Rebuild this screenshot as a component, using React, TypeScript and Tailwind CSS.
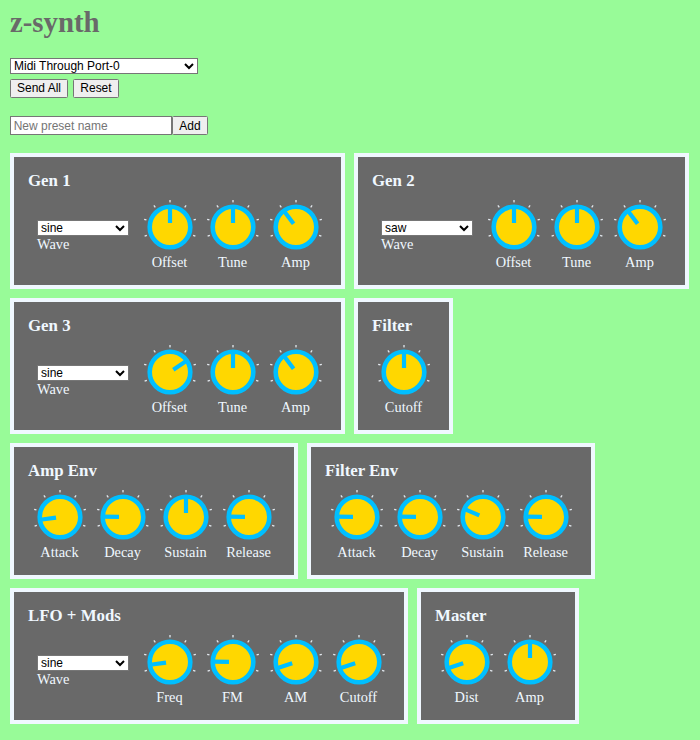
import React from "react";

type KnobSpec = { label: string; angle: number };
type PanelSpec = { title: string; wave?: string; knobs: KnobSpec[] };

const rows: PanelSpec[][] = [
  [
    {
      title: "Gen 1",
      wave: "sine",
      knobs: [
        { label: "Offset", angle: 0 },
        { label: "Tune", angle: 0 },
        { label: "Amp", angle: -37 },
      ],
    },
    {
      title: "Gen 2",
      wave: "saw",
      knobs: [
        { label: "Offset", angle: 0 },
        { label: "Tune", angle: 0 },
        { label: "Amp", angle: -37 },
      ],
    },
  ],
  [
    {
      title: "Gen 3",
      wave: "sine",
      knobs: [
        { label: "Offset", angle: 56 },
        { label: "Tune", angle: 0 },
        { label: "Amp", angle: -37 },
      ],
    },
    { title: "Filter", knobs: [{ label: "Cutoff", angle: 0 }] },
  ],
  [
    {
      title: "Amp Env",
      knobs: [
        { label: "Attack", angle: -98 },
        { label: "Decay", angle: -89 },
        { label: "Sustain", angle: 0 },
        { label: "Release", angle: -89 },
      ],
    },
    {
      title: "Filter Env",
      knobs: [
        { label: "Attack", angle: -89 },
        { label: "Decay", angle: -89 },
        { label: "Sustain", angle: -67 },
        { label: "Release", angle: -89 },
      ],
    },
  ],
  [
    {
      title: "LFO + Mods",
      wave: "sine",
      knobs: [
        { label: "Freq", angle: -98 },
        { label: "FM", angle: -89 },
        { label: "AM", angle: -108 },
        { label: "Cutoff", angle: -108 },
      ],
    },
    {
      title: "Master",
      knobs: [
        { label: "Dist", angle: -108 },
        { label: "Amp", angle: 0 },
      ],
    },
  ],
];

const ticks = [-110, -73.33, -36.67, 0, 36.67, 73.33, 110];

const control =
  "box-border [zoom:0.9] text-[13.333px] leading-[normal] [appearance:auto] [background:revert] [border-radius:revert] [border:revert] [color:revert] [letter-spacing:revert]";

function Knob({ label, angle }: KnobSpec) {
  return (
    <div className="flex w-[63px] flex-col items-center">
      <svg width="63" height="54" viewBox="0 0 63 54" className="block">
        {ticks.map((t) => (
          <rect
            key={t}
            x="31.35"
            y="0"
            width="1.3"
            height="2.4"
            fill="#e4eaf0"
            transform={`rotate(${t} 32 27)`}
          />
        ))}
        <circle cx="32" cy="27" r="20.3" fill="#ffd700" stroke="#00bfff" strokeWidth="4.6" />
        <rect
          x="29.9"
          y="7"
          width="4.2"
          height="16"
          fill="#00bfff"
          transform={`rotate(${angle} 32 27)`}
        />
      </svg>
      <span className="whitespace-nowrap text-[14.4px] leading-[17px]">{label}</span>
    </div>
  );
}

function Panel({ title, wave, knobs }: PanelSpec) {
  return (
    <section className="h-[136px] shrink-0 border-4 border-[#f0f8ff] bg-[#696969] px-[14px] pt-[14px] text-[#f0f8ff]">
      <h3 className="text-[16.85px] leading-[19px] font-bold">{title}</h3>
      <div className="mt-[10px] flex">
        {wave && (
          <div className="flex w-[110px] flex-col px-[9px] pt-5">
            <div className="flex h-4 font-['Liberation_Sans',sans-serif]">
              <select className={`${control} h-[17.78px] w-[102.22px] shrink-0`} defaultValue={wave}>
                <option>sine</option>
                <option>saw</option>
              </select>
            </div>
            <span className="text-[14.4px] leading-[17px]">Wave</span>
          </div>
        )}
        {knobs.map((k) => (
          <Knob key={k.label} {...k} />
        ))}
      </div>
    </section>
  );
}

export default function App() {
  return (
    <main className="h-[740px] w-[700px] overflow-hidden bg-[#98fb98] pl-[10px] font-['Liberation_Serif',serif]">
      <h1 className="pt-[6px] text-[28.8px] leading-[33px] font-bold text-[#696969]">z-synth</h1>
      <div className="mt-[19px] flex h-4 font-['Liberation_Sans',sans-serif]">
        <select className={`${control} h-[17.78px] w-[208.89px]`}>
          <option>Midi Through Port-0</option>
        </select>
      </div>
      <div className="mt-[5px] flex h-[19px] gap-[5px] font-['Liberation_Sans',sans-serif]">
        <button className={`${control} h-[21.11px] w-[64.44px] whitespace-nowrap`}>Send All</button>
        <button className={`${control} h-[21.11px] w-[51.11px]`}>Reset</button>
      </div>
      <div className="mt-[18px] flex h-[19px] font-['Liberation_Sans',sans-serif]">
        <input
          className={`${control} h-[21.11px] w-[180px] pt-[2px] pr-[2px] pl-[3px] placeholder:text-[#757575]`}
          placeholder="New preset name"
        />
        <button className={`${control} h-[21.11px] w-[40px] pt-[2px]`}>Add</button>
      </div>
      <div className="mt-[18px] flex flex-col gap-[9px]">
        {rows.map((row, i) => (
          <div key={i} className="flex gap-[9px]">
            {row.map((p) => (
              <Panel key={p.title} {...p} />
            ))}
          </div>
        ))}
      </div>
    </main>
  );
}
